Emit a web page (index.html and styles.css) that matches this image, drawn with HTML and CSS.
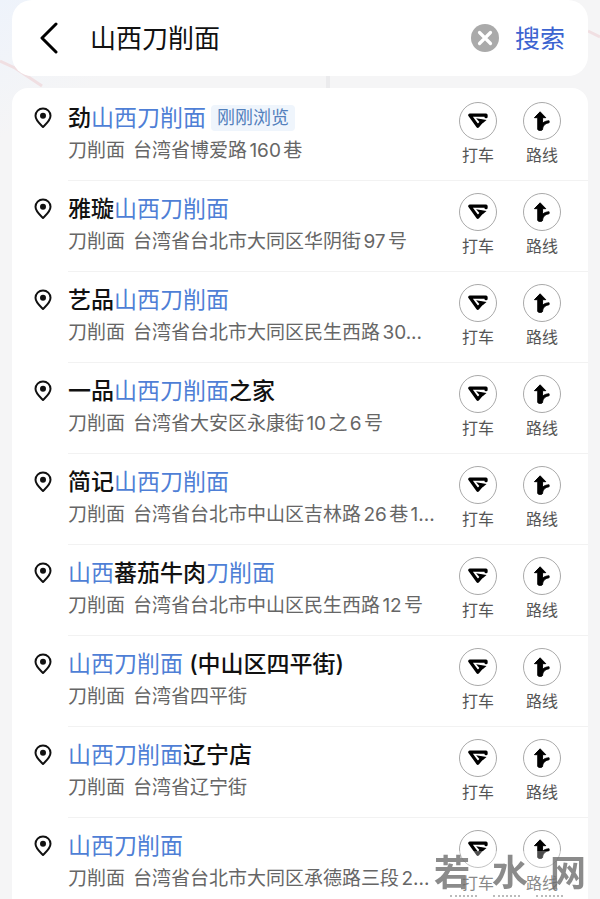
FILE: index.html
```html
<!DOCTYPE html>
<html lang="zh-CN">
<head>
  <meta charset="UTF-8" />
  <meta name="viewport" content="width=device-width, initial-scale=1.0"/>
  <title>山西刀削面 - 搜索</title>
  <link rel="stylesheet" href="styles.css">
</head>
<body>
  <!-- Shared icons -->
  <svg class="sprite" aria-hidden="true">
    <symbol id="pin" viewBox="0 0 18 22">
      <path d="M9 1.500C4.800 1.500 1.500 4.700 1.500 8.800c0 4.600 4.500 8.200 7.500 11.200 3-3 7.500-6.600 7.500-11.200C16.500 4.700 13.200 1.500 9 1.500z" fill="none" stroke="#111" stroke-width="2" stroke-linejoin="round"/>
      <circle cx="9" cy="8.800" r="3" fill="#111"/>
    </symbol>
    <symbol id="taxi" viewBox="0 0 38 38">
      <path d="M27.500 14.500V12.800H10.300L18.800 24.500l4.200-5" fill="none" stroke="#000" stroke-width="3.400" stroke-linejoin="round" stroke-linecap="round"/>
      <path d="M17 16L28 18l-4 3.500-3.500-1.500z" fill="#000"/>
    </symbol>
    <symbol id="route" viewBox="0 0 38 38">
      <path d="M17 9.300L23 15.500H19.600V21.500C21.500 19.500 23.500 19 26.500 18.800V20.800C23 21.500 19.600 23.500 19.600 28C19.600 29.300 14.500 29.300 14.500 28V15.500H11z" fill="#000" stroke="#000" stroke-width="1" stroke-linejoin="round"/>
    </symbol>
  </svg>

  <!-- Map roads behind the panels -->
  <svg class="map" viewBox="0 0 600 100" preserveAspectRatio="none" aria-hidden="true">
    <path d="M0 61L15 68L42 86M588 31L600 37" fill="none" stroke="#f0dfe2" stroke-width="3"/>
    <path d="M328 74V90" fill="none" stroke="#ebebed" stroke-width="4"/>
  </svg>

  <div class="container">
    <form class="search-bar">
      <button type="button" class="back" aria-label="返回">
        <svg viewBox="0 0 20 32" width="20" height="32"><path d="M18 2L4 16l14 14" fill="none" stroke="#000" stroke-width="3" stroke-linecap="round" stroke-linejoin="round"/></svg>
      </button>
      <input type="text" id="query" value="山西刀削面" aria-label="搜索地点">
      <button type="button" class="clear" aria-label="清除">
        <svg viewBox="0 0 28 28" width="28" height="28"><circle cx="14" cy="14" r="14" fill="#aaa"/><path d="M8.500 8.500l11 11M19.500 8.500l-11 11" stroke="#fff" stroke-width="3.200" stroke-linecap="round"/></svg>
      </button>
      <button type="submit" class="submit">搜索</button>
    </form>

    <ul class="results" id="results"></ul>
  </div>

  <div class="watermark">
    <div class="mark"><span>若</span><span>水</span><span>网</span></div>
    <div class="dots"><i></i><i></i><i></i></div>
  </div>

  <script src="script.js"></script>
</body>
</html>
```
FILE: styles.css
```css
* {
  box-sizing: border-box;
}
body {
  margin: 0;
  height: 100vh;
  overflow: hidden;
  font-family: Inter, "Noto Sans CJK SC", sans-serif;
  background: linear-gradient(150deg, #eef3fb 0, #f5f5f6 120px);
  color: #111;
}
button {
  border: none;
  padding: 0;
  background: none;
  font-family: inherit;
  color: inherit;
  cursor: pointer;
}
svg {
  display: block;
}
.sprite {
  display: none;
}
.map {
  position: absolute;
  top: 0;
  left: 0;
  z-index: -1;
  width: 100%;
  height: 100px;
}
.container {
  display: flex;
  flex-direction: column;
  gap: 12px;
  padding: 0 12px;
}
.search-bar {
  display: flex;
  align-items: center;
  height: 76px;
  padding: 0 23px 0 26px;
  background: white;
  border-radius: 20px;
}
.search-bar input {
  flex: 1;
  min-width: 0;
  height: 40px;
  margin-left: 32px;
  padding: 0 0 3px;
  border: none;
  outline: none;
  font-family: inherit;
  font-size: 26px;
  color: #111;
}
.submit {
  margin-left: 16px;
  padding-bottom: 3px;
  font-size: 25px;
  color: #3c64d0;
}
.results {
  list-style: none;
  margin: 0;
  padding: 2px 0 0;
  background: white;
  border-radius: 16px 16px 0 0;
}
.result {
  display: flex;
  height: 91px;
  padding-left: 22px;
}
.pin {
  flex: none;
  width: 18px;
  height: 22px;
  margin-top: 17px;
}
.body {
  flex: 1;
  display: flex;
  min-width: 0;
  margin-left: 16px;
  padding-right: 27px;
  border-bottom: 1px solid #f2f2f2;
}
.info {
  flex: 1;
  min-width: 0;
  padding-top: 12px;
  white-space: nowrap;
}
.info h3 {
  display: flex;
  align-items: center;
  margin: 0;
  font-size: 23px;
  font-weight: 500;
  line-height: 32px;
  white-space: pre;
}
.info em {
  font-style: normal;
  font-weight: 400;
  color: #4f7fd6;
}
.info p {
  display: flex;
  gap: 8px;
  margin: 0;
  font-size: 19px;
  line-height: 34px;
  color: #666;
  text-autospace: normal;
}
.tag {
  margin-left: 5px;
  padding: 0 6px;
  border-radius: 4px;
  font-size: 18px;
  font-weight: 400;
  line-height: 26px;
  color: #5481bd;
  background: #eff5fc;
}
.actions {
  display: flex;
  gap: 26px;
  padding-top: 12px;
}
.actions button {
  display: flex;
  flex-direction: column;
  align-items: center;
  width: 38px;
  font-size: 16px;
  line-height: 30px;
  color: #555;
}
.actions svg {
  width: 38px;
  height: 38px;
  border: 1px solid #aaa;
  border-radius: 50%;
}
.watermark {
  position: fixed;
  right: 12px;
  bottom: 0;
  padding: 0 2px 2px 6px;
  background: rgba(255,255,255,0.3);
}
.mark {
  display: flex;
  gap: 22px;
  font-size: 36px;
  font-weight: 700;
  line-height: 44px;
  color: rgba(110,110,110,0.8);
}
.dots {
  display: flex;
  gap: 16px;
  padding-left: 16px;
}
.dots i {
  width: 27px;
  border-bottom: 2px dotted #bbb;
}
```
FILE: script.js
```js
// Text between * is the matched part of the name
const places = [
  { name: "劲*山西刀削面*", address: "台湾省博爱路160巷", tag: "刚刚浏览" },
  { name: "雅璇*山西刀削面*", address: "台湾省台北市大同区华阴街97号" },
  { name: "艺品*山西刀削面*", address: "台湾省台北市大同区民生西路30..." },
  { name: "一品*山西刀削面*之家", address: "台湾省大安区永康街10之6号" },
  { name: "简记*山西刀削面*", address: "台湾省台北市中山区吉林路26巷1..." },
  { name: "*山西*蕃茄牛肉*刀削面*", address: "台湾省台北市中山区民生西路12号" },
  { name: "*山西刀削面* (中山区四平街)", address: "台湾省四平街" },
  { name: "*山西刀削面*辽宁店", address: "台湾省辽宁街" },
  { name: "*山西刀削面*", address: "台湾省台北市大同区承德路三段2..." }
];

document.getElementById("results").innerHTML = places.map(place => `
  <li class="result">
    <svg class="pin"><use href="#pin"/></svg>
    <div class="body">
      <div class="info">
        <h3>${place.name.replace(/\*(.+?)\*/g, "<em>$1</em>")}${place.tag ? `<span class="tag">${place.tag}</span>` : ""}</h3>
        <p><span>刀削面</span><span>${place.address}</span></p>
      </div>
      <div class="actions">
        <button type="button"><svg><use href="#taxi"/></svg>打车</button>
        <button type="button"><svg><use href="#route"/></svg>路线</button>
      </div>
    </div>
  </li>`).join("");
```
